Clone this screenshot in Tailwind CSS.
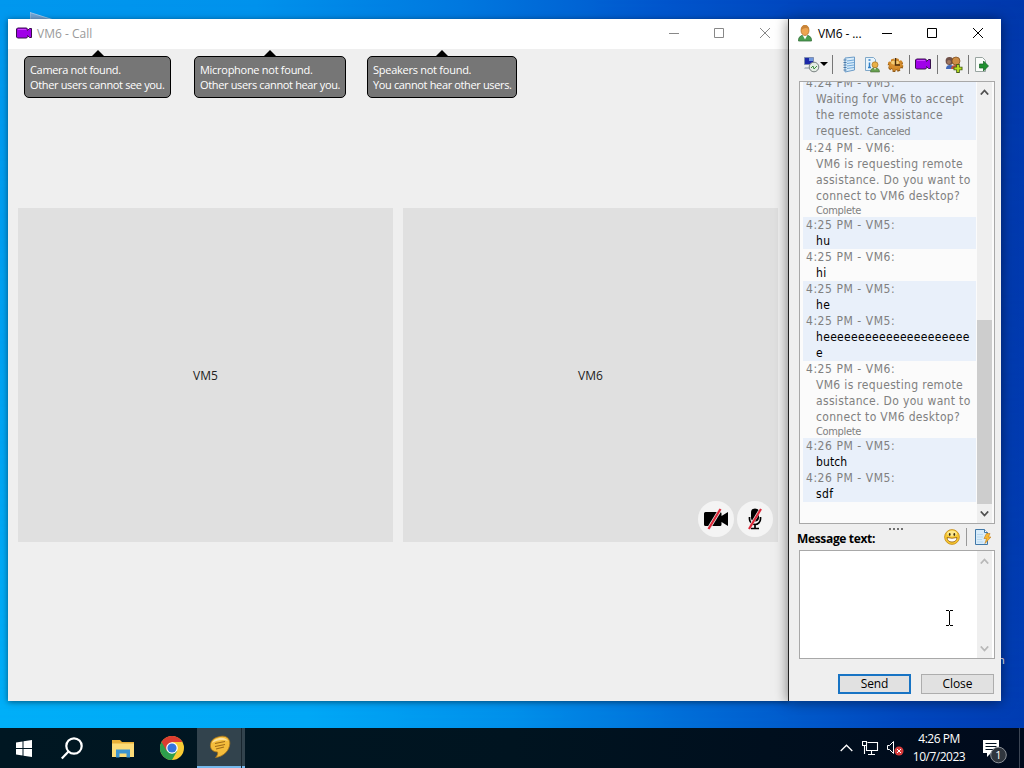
<!DOCTYPE html>
<html lang="en">
<head>
    <meta charset="UTF-8">
    <meta name="viewport" content="width=device-width, initial-scale=1.0">
    <title>VM6 - Call</title>
    <script src="https://cdn.jsdelivr.net/npm/@tailwindcss/browser@4"></script>
</head>
<body class="w-[1024px] h-[768px] overflow-hidden font-['Open_Sans','Liberation_Sans',sans-serif] text-[12px]">
<div class="relative w-full h-full overflow-hidden flex flex-col justify-end bg-[linear-gradient(90deg,#0098ee_0%,#0092ec_25%,#0078df_45%,#0055cc_65%,#0044bc_80%,#0038ac_100%)]">

    <!-- Wallpaper gets brighter towards the bottom -->
    <div class="absolute left-0 top-0 w-full h-[728px] bg-[linear-gradient(90deg,#00aff8_0%,#00a8f6_30%,#0090ea_50%,#0068d4_70%,#0048bf_88%,#003cb2_100%)] mask-[linear-gradient(transparent,black)]"></div>

    <!-- Desktop leftovers peeking out behind the windows -->
    <svg class="absolute left-[30px] top-[12px]" width="30" height="10" viewBox="0 0 30 10"><path d="M0 0.5L27 9H0Z" fill="#6fa3d4" stroke="#b5cfe8" stroke-width=".8"/></svg>
    <div class="absolute left-[998px] top-[653px] text-white text-[11px] leading-[14px]">n</div>

    <!-- Call window -->
    <div class="absolute left-[8px] top-[19px] w-[781px] h-[682px] bg-[#efefef] flex flex-col shadow-[0_1px_6px_rgba(0,0,0,0.5)]">
        <div class="h-[30px] bg-white flex items-center pl-[8px] text-[#999]">
            <svg class="-mt-[2px]" width="17" height="12" viewBox="0 0 17 12"><path d="M1.500 1h8.500q1.500 0 1.500 1.500v1l2-2h2v9h-2l-2-2v1q0 1.500-1.500 1.500h-8.500l-1-1v-8z" fill="#a000e8" stroke="#38104c"/><path d="M2 2.500h8" stroke="#d040ff"/></svg>
            <span class="ml-[4px]">VM6 - Call</span>
            <div class="ml-auto mr-[18px] -mt-[1px] flex gap-[35px]">
                <svg width="11" height="11" fill="none" stroke="#888"><path d="M1 5.500h10"/></svg>
                <svg width="11" height="11" fill="none" stroke="#888"><path d="M.5 .5h9v9h-9z"/></svg>
                <svg width="11" height="11" fill="none" stroke="#888"><path d="M0 0l10 10M10 0L0 10"/></svg>
            </div>
        </div>
        <div class="flex h-[159px] pl-[16px] text-white text-[11px] leading-[15px]">
            <div class="w-[147px] mr-[23px] flex flex-col items-center">
                <svg class="mt-px" width="12" height="6"><path d="M6 0l6 6H0z"/></svg>
                <div class="w-full h-[42px] rounded-[5px] border border-black bg-[#767676] pl-[5px] pt-[5px] whitespace-nowrap"><p class="tracking-[-0.33px]">Camera not found.</p><p class="tracking-[-0.35px]">Other users cannot see you.</p></div>
            </div>
            <div class="w-[152px] mr-[21px] flex flex-col items-center">
                <svg class="mt-px" width="12" height="6"><path d="M6 0l6 6H0z"/></svg>
                <div class="w-full h-[42px] rounded-[5px] border border-black bg-[#767676] pl-[5px] pt-[5px] whitespace-nowrap"><p class="tracking-[-0.28px]">Microphone not found.</p><p class="tracking-[-0.35px]">Other users cannot hear you.</p></div>
            </div>
            <div class="w-[150px] flex flex-col items-center">
                <svg class="mt-px" width="12" height="6"><path d="M6 0l6 6H0z"/></svg>
                <div class="w-full h-[42px] rounded-[5px] border border-black bg-[#767676] pl-[5px] pt-[5px] whitespace-nowrap"><p class="tracking-[-0.26px]">Speakers not found.</p><p class="tracking-[-0.36px]">You cannot hear other users.</p></div>
            </div>
        </div>
        <div class="flex gap-[10px] pl-[10px] text-[#222]">
            <div class="w-[375px] h-[334px] bg-[#e0e0e0] flex items-center justify-center pt-[2px]">VM5</div>
            <div class="relative w-[375px] h-[334px] bg-[#e0e0e0] flex items-center justify-center pt-[2px]">VM6
                <div class="absolute right-[5px] bottom-[5px] flex gap-[3px]">
                    <div class="size-[36px] rounded-full bg-[#f4f4f4] flex items-center justify-center">
                        <svg width="26" height="24" viewBox="0 0 26 24"><path d="M1 6.500q0-1.500 1.500-1.500H17q1.500 0 1.500 1.500V9L25 5v14l-6.500-4v2.500q0 1.500-1.500 1.500H2.500Q1 19 1 17.500z" fill="#000"/><path d="M6 21L17 3" stroke="#e8e8e8" stroke-width="3.500"/><path d="M5.500 22L17.500 2" stroke="#dc2838" stroke-width="2.200"/></svg>
                    </div>
                    <div class="size-[36px] rounded-full bg-[#f4f4f4] flex items-center justify-center">
                        <svg width="24" height="24" viewBox="0 0 24 24"><rect x="8" y="1.500" width="8" height="13" rx="4"/><path d="M6.500 10v2a5.500 5.500 0 0011 0v-2M12 18v4M8 21.500h8" fill="none" stroke="#000" stroke-width="1.700"/><path d="M7.500 19L16.500 4" stroke="#e8e8e8" stroke-width="3"/><path d="M6 22L18 2" stroke="#dc2838" stroke-width="2.200"/></svg>
                    </div>
                </div>
            </div>
        </div>
    </div>

    <!-- Chat window -->
    <div class="absolute left-[788px] top-[19px] w-[213px] h-[682px] bg-[#efefef] border-l border-[#222] flex flex-col shadow-[0_1px_12px_rgba(0,0,0,0.5)]">
        <div class="h-[30px] bg-white flex items-center pl-[8px] text-black">
            <svg class="-mt-[2px]" width="16" height="17" viewBox="0 0 16 17"><path d="M1.500 16q-.5-4 3-5.500h7q3.500 1.500 3 5.500z" fill="#4a9e50" stroke="#35703a" stroke-width=".8"/><path d="M5.500 10l2.500 4.500L10.500 10z" fill="#fff"/><ellipse cx="8" cy="5.500" rx="4" ry="5" fill="#eda550" stroke="#a86820" stroke-width=".7"/><path d="M4 5q0-5 4-5t4 5q-1-2-3-2t-5 2" fill="#c98438"/></svg>
            <span class="ml-[5px] tracking-[-0.1px]">VM6 - ...</span>
            <div class="ml-auto mr-[17px] -mt-[1px] flex gap-[35px]">
                <svg width="11" height="11" fill="none" stroke="#000"><path d="M1 5.500h10"/></svg>
                <svg width="11" height="11" fill="none" stroke="#000"><path d="M.5 .5h9v9h-9z"/></svg>
                <svg width="11" height="11" fill="none" stroke="#000"><path d="M0 0l10 10M10 0L0 10"/></svg>
            </div>
        </div>
        <!-- Toolbar -->
        <div class="h-[32px] shrink-0 flex items-center pl-[14px] pb-[2px]">
            <svg width="17" height="17" viewBox="0 0 17 17"><path d="M1.500 1.500h9v7h-9z" fill="#1c28a8" stroke="#8090b0"/><path d="M6 2h4v3H6z" fill="#7098e0"/><path d="M2 11h5v2H1z" fill="#b8c0c8"/><circle cx="11" cy="11" r="4.800" fill="#e4ece4" stroke="#788080"/><path d="M8 12l2-2 1 3 3-3" fill="none" stroke="#409040"/></svg>
            <svg width="8" height="4"><path d="M0 0h8L4 4z"/></svg>
            <i class="ml-[4px] w-px h-[19px] bg-[#777]"></i>
            <svg class="ml-[9px]" width="15" height="17" viewBox="0 0 15 17"><path d="M3 2l9.500-1v13L3 16z" fill="#d8ecfa" stroke="#6c9cc8"/><path d="M5 5l7-1M5 7.500l7-1M5 10l7-1M5 12.500l7-1" stroke="#72a8d8"/><path d="M1.500 4h3M1.500 6.500h3M1.500 9h3M1.500 11.500h3M1.500 14h3" stroke="#4878a8"/></svg>
            <svg class="ml-[7px]" width="17" height="17" viewBox="0 0 17 17"><path d="M1.500 1.500h8l2 2v11h-10z" fill="#e8f4fc" stroke="#80a8c8"/><path d="M4.500 4h2M5.500 6.500v5M4 11.500h3" stroke="#3080c8" stroke-width="1.500"/><path d="M6.500 16q0-4 4.500-4.500 4.500.5 4.500 4.500z" fill="#68a050" stroke="#486838" stroke-width=".6"/><path d="M10 12l1 2 1-2z" fill="#fff"/><circle cx="11" cy="8.800" r="3" fill="#e8b048" stroke="#a87020" stroke-width=".7"/></svg>
            <svg class="ml-[6px]" width="17" height="17" viewBox="0 0 17 17"><ellipse cx="8.500" cy="9.500" rx="6.300" ry="5" fill="#a86414" stroke="#8c5410" stroke-width="3" stroke-dasharray="2.600 1.800"/><ellipse cx="8.500" cy="8.500" rx="6.300" ry="5" fill="#d89030" stroke="#d08828" stroke-width="2.500" stroke-dasharray="2.600 1.800"/><ellipse cx="8" cy="6.500" rx="4" ry="2" fill="#f4cc74"/><path d="M8.500 2v7h4.500" fill="none" stroke="#4c2c08" stroke-width="1.400"/></svg>
            <i class="ml-[5px] w-px h-[19px] bg-[#777]"></i>
            <svg class="ml-[5px]" width="17" height="12" viewBox="0 0 17 12"><path d="M1.500 1h8.500q1.500 0 1.500 1.500v1l2-2h2v9h-2l-2-2v1q0 1.500-1.500 1.500h-8.500l-1-1v-8z" fill="#a000e8" stroke="#38104c"/><path d="M2 2.500h8" stroke="#d040ff"/></svg>
            <i class="ml-[5px] w-px h-[19px] bg-[#777]"></i>
            <svg class="ml-[7px]" width="18" height="17" viewBox="0 0 18 17"><path d="M1 13q0-4 4-4t5 4z" fill="#4068b8"/><circle cx="4.500" cy="5" r="3.900" fill="#705048"/><circle cx="4" cy="6" r="2" fill="#a07860"/><path d="M6 13q0-4 5-4t4 4z" fill="#c05038"/><circle cx="11" cy="5" r="4" fill="#cc8c44" stroke="#784818" stroke-width=".7"/><path d="M13 8v9M8.500 12.500h9" stroke="#486018" stroke-width="3.600"/><path d="M13 9v7M9.500 12.500h7" stroke="#b8e020" stroke-width="1.800"/></svg>
            <i class="ml-[5px] w-px h-[19px] bg-[#777]"></i>
            <svg class="ml-[5px]" width="16" height="17" viewBox="0 0 16 17"><path d="M1.500 1.500h7l3 3v11h-10z" fill="#fafcfa" stroke="#98a4a0"/><path d="M5.500 8h4V5l5 5-5 5v-3h-4z" fill="#209030" stroke="#106020" stroke-width=".7"/></svg>
        </div>
        <!-- History -->
        <div class="ml-[10px] w-[196px] h-[443px] shrink-0 border border-[#a8a8a8] bg-[#fbfbfb] flex overflow-hidden">
            <div class="w-[177px] pl-[3px] pr-px -mt-[7px] font-['DejaVu_Sans_Condensed','DejaVu_Sans',sans-serif] text-[12px] leading-[16px] tracking-[0.33px] text-[#808080] whitespace-nowrap [&_p]:pl-[3px] [&_p]:tracking-[0.55px] [&_div_div]:pl-[13px]">
                <div class="bg-[#e9f0fa]"><p>4:24 PM - VM5:</p><div>Waiting for VM6 to accept<br>the remote assistance<br>request. <span class="text-[11px] tracking-[-0.3px]">Canceled</span></div></div>
                <div><p>4:24 PM - VM6:</p><div>VM6 is requesting remote<br>assistance. Do you want to<br>connect to VM6 desktop?</div><div class="text-[11px] leading-[13px] tracking-[-0.35px]">Complete</div></div>
                <div class="bg-[#e9f0fa]"><p>4:25 PM - VM5:</p><div class="text-black">hu</div></div>
                <div><p>4:25 PM - VM6:</p><div class="text-black">hi</div></div>
                <div class="bg-[#e9f0fa]"><p>4:25 PM - VM5:</p><div class="text-black">he</div></div>
                <div class="bg-[#e9f0fa]"><p>4:25 PM - VM5:</p><div class="text-black">heeeeeeeeeeeeeeeeeeeee<br>e</div></div>
                <div><p>4:25 PM - VM6:</p><div>VM6 is requesting remote<br>assistance. Do you want to<br>connect to VM6 desktop?</div><div class="text-[11px] leading-[13px] tracking-[-0.35px]">Complete</div></div>
                <div class="bg-[#e9f0fa]"><p>4:26 PM - VM5:</p><div class="text-black tracking-[0.1px]">butch</div></div>
                <div class="bg-[#e9f0fa]"><p>4:26 PM - VM5:</p><div class="text-black">sdf</div></div>
            </div>
            <div class="w-[15px] bg-[#efefef] flex flex-col items-center">
                <svg class="mt-[7px]" width="9" height="6"><path d="M.8 5.500L4.500 1.500 8.200 5.500" fill="none" stroke="#505050" stroke-width="1.800"/></svg>
                <div class="mt-[225px] w-full h-[184px] bg-[#cdcdcd]"></div>
                <svg class="mt-[7px]" width="9" height="6"><path d="M.8 .5L4.500 4.500 8.200 .5" fill="none" stroke="#505050" stroke-width="1.800"/></svg>
            </div>
        </div>
        <!-- Composer -->
        <div class="relative h-[26px] shrink-0 flex items-center pl-[8px] text-black font-bold">
            <svg class="absolute left-[100px] top-[4px]" width="15" height="2"><path d="M0 1h2M4 1h2M8 1h2M12 1h2" stroke="#707070" stroke-width="2"/></svg>
            <span class="pt-[4px] tracking-[-0.34px] whitespace-nowrap">Message text:</span>
            <svg class="ml-auto" width="16" height="16" viewBox="0 0 16 16"><circle cx="8" cy="8" r="7.400" fill="#f8c830" stroke="#c08818" stroke-width=".8"/><ellipse cx="8" cy="4.500" rx="5" ry="3" fill="#fce88c"/><ellipse cx="5.700" cy="5.500" rx=".9" ry="1.400" fill="#403010"/><ellipse cx="10.300" cy="5.500" rx=".9" ry="1.400" fill="#403010"/><path d="M3 8.500q5 1.500 10 0-.5 4.500-5 4.500t-5-4.500z" fill="#fff" stroke="#905c10" stroke-width=".8"/></svg>
            <i class="ml-[6px] w-px h-[18px] bg-[#999]"></i>
            <svg class="ml-[7px] mr-[10px]" width="17" height="16" viewBox="0 0 17 16"><path d="M1.500 .5h9l3 3v12h-12z" fill="#d8ecfa" stroke="#4078a8"/><path d="M10.500 .5v3h3" fill="#fff" stroke="#4078a8"/><path d="M3 5.500h6M3 8h6M3 10.500h5M3 13h6" stroke="#b8d8f0"/><path d="M12.500 4.500h3.500L14.500 8H17l-6 6.500 1.500-5H10z" fill="#f8b830" stroke="#c07818" stroke-width=".6"/></svg>
        </div>
        <div class="ml-[10px] w-[196px] h-[109px] shrink-0 border border-[#a8a8a8] bg-white flex justify-end pr-[2px]">
            <div class="w-[15px] bg-[#efefef] flex flex-col items-center justify-between pt-[7px] pb-[6px]">
                <svg width="9" height="6"><path d="M.8 5.500L4.500 1.500 8.200 5.500" fill="none" stroke="#b8b8b8" stroke-width="1.800"/></svg>
                <svg width="9" height="6"><path d="M.8 .5L4.500 4.500 8.200 .5" fill="none" stroke="#b8b8b8" stroke-width="1.800"/></svg>
            </div>
        </div>
        <div class="flex mt-[15px] ml-[49px] gap-[10px] text-black tracking-[-0.1px]">
            <div class="w-[73px] h-[20px] border-2 border-[#1874c4] bg-[#e1e1e1] flex items-center justify-center">Send</div>
            <div class="w-[73px] h-[20px] border border-[#adadad] bg-[#e1e1e1] flex items-center justify-center">Close</div>
        </div>
    </div>

    <!-- Text cursor -->
    <svg class="absolute left-[946px] top-[610px]" width="8" height="17" fill="none" stroke="#000"><path d="M0 .5h3M4 .5h3M3.500 1v14M0 15.500h3M4 15.500h3"/></svg>

    <!-- Taskbar -->
    <div class="relative h-[40px] bg-[linear-gradient(90deg,#001722,#001420_50%,#000a1c)] flex items-center text-white">
        <svg class="ml-[16px]" width="17" height="17" viewBox="0 0 17 17" fill="#fff"><path d="M0 2.500l6.500-1V8H0zM7.500 1.300L16 0v8H7.500zM0 9h6.500v6.500L0 14.500zM7.500 9H16v8l-8.500-1.300z"/></svg>
        <svg class="ml-[28px]" width="23" height="23" viewBox="0 0 23 23" fill="none" stroke="#fff" stroke-width="2.200"><circle cx="13" cy="9" r="7.700"/><path d="M7.500 14.500L.8 21.500"/></svg>
        <svg class="ml-[28px]" width="22" height="19" viewBox="0 0 22 19"><path d="M0 1h8l2 2h12v15H0z" fill="#e8b038"/><path d="M0 4.500h22V18H0z" fill="#fcdc78"/><path d="M4 18.500v-8h14v8h-3.500v-4h-7v4z" fill="#3c94d0"/></svg>
        <svg class="ml-[26px]" width="24" height="24" viewBox="0 0 24 24"><circle cx="12" cy="12" r="12" fill="#f9cb34"/><path d="M12 12L1.600 6A12 12 0 0012 24l5.200-9z" fill="#2e9e4c"/><path d="M1.600 6a12 12 0 0120.800 0H12l-5.200 9z" fill="#dc3c30"/><circle cx="12" cy="12" r="5.800" fill="#fff"/><circle cx="12" cy="12" r="4.600" fill="#3474dc"/></svg>
        <div class="relative ml-[13px] w-[48px] h-[40px] bg-[#32434d] border-b-2 border-[#76b9ed] flex items-center justify-center pr-[2px]">
            <svg width="22" height="24" viewBox="0 0 22 24"><path d="M11 1.500c6-1.500 10 2 9.800 7-.3 7-6 13-14.300 14 2-2 2.500-4 2-5.500C3 17 1 13 1.500 9.500 2 5 5.500 2.500 11 1.500z" fill="#f5bd3c" stroke="#a87418" stroke-width=".8"/><path d="M3 8c2-5 12-8 16-2-5-2-11-1-16 2z" fill="#fce09a"/><path d="M6 8.500l10-2M6 11.500l10-2M7 14l8-2" stroke="#a06c18" stroke-width="1.200"/></svg>
            <i class="absolute right-[3px] top-0 w-px h-[40px] bg-[#17252e]"></i>
        </div>
        <svg class="ml-auto" width="13" height="8" fill="none" stroke="#fff" stroke-width="1.300"><path d="M.7 7L6.500 1.200 12.300 7"/></svg>
        <svg class="ml-[9px]" width="17" height="14" viewBox="0 0 17 14" fill="none" stroke="#fff" stroke-width="1.100"><path d="M5.500 1.500h10v8h-11V5M9.500 10v3M6 13.500h7M.5 .5h4v4h-4zM2.500 5v8"/></svg>
        <svg class="ml-[8px]" width="17" height="16" viewBox="0 0 17 16"><path d="M.5 5.500h2l4-4v12l-4-4h-2z" fill="none" stroke="#fff"/><circle cx="12" cy="11" r="4.500" fill="#d83c3c"/><path d="M10 9l4 4M14 9l-4 4" stroke="#fff"/></svg>
        <div class="ml-[6px] w-[58px] text-center leading-[18px] whitespace-nowrap tracking-[-0.5px]">4:26 PM<br>10/7/2023</div>
        <svg class="ml-[14px] mt-[6px] mr-[16px]" width="26" height="26" viewBox="0 0 26 26"><path d="M1 2h16v13H9l-4 4v-4H1z" fill="#fff"/><path d="M3.500 5.500h11M3.500 8.500h11M3.500 11.500h8" stroke="#001020"/><circle cx="16.500" cy="17" r="7.800" fill="#30363e" stroke="#8c9198"/><text x="16.500" y="21" text-anchor="middle" font-family="Open Sans" font-size="11" fill="#fff">1</text></svg>
        <i class="absolute right-[4px] top-0 w-px h-[40px] bg-[#3c4554]"></i>
    </div>
</div>
</body>
</html>
